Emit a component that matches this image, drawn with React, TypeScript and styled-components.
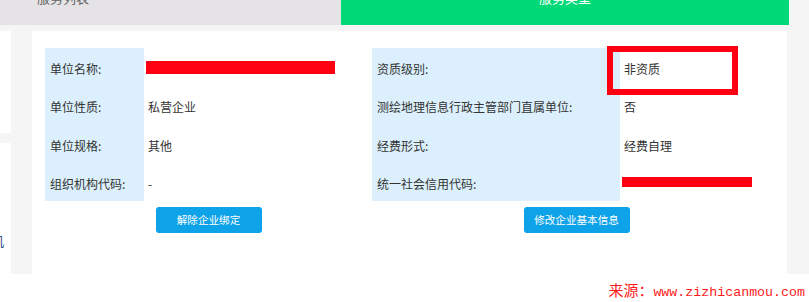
import styled, { createGlobalStyle } from "styled-components";

const GlobalStyle = createGlobalStyle`
  html, body {
    margin: 0;
    padding: 0;
    background: #ffffff;
    font-family: "Noto Sans CJK SC", "Noto Sans", sans-serif;
  }
`;

const Page = styled.div`
  width: 809px;
  height: 302px;
  overflow: hidden;
  display: flex;
  flex-direction: column;
`;

const Workspace = styled.div`
  height: 275px;
  background: #f5f5f5;
  display: flex;
  flex-direction: column;
`;

const TabBar = styled.div`
  display: flex;
  height: 25px;
  margin-right: 20px;
`;

const Tab = styled.div<{ $active?: boolean; $width?: number }>`
  flex: ${({ $width }) => ($width ? `0 0 ${$width}px` : "1")};
  background: ${({ $active }) => ($active ? "#00d977" : "#e5e3e5")};
  color: ${({ $active }) => ($active ? "#ffffff" : "#666666")};
  display: flex;
  justify-content: ${({ $active }) => ($active ? "center" : "flex-start")};
  padding-left: ${({ $active }) => ($active ? "0" : "37px")};
  overflow: hidden;
`;

const TabLabel = styled.span`
  font-size: 13px;
  line-height: 13px;
  margin-top: -9px;
  height: 13px;
`;

const Body = styled.div`
  flex: 1;
  display: flex;
  padding-top: 6px;
  gap: 21px;
`;

const Sidebar = styled.div`
  width: 11px;
  display: flex;
  flex-direction: column;
  gap: 10px;
  overflow: hidden;
`;

const SidePanel = styled.div<{ $grow?: boolean }>`
  background: #ffffff;
  height: ${({ $grow }) => ($grow ? "auto" : "102px")};
  flex: ${({ $grow }) => ($grow ? "1" : "none")};
  display: flex;
  justify-content: flex-end;
  align-items: flex-start;
  overflow: hidden;
`;

const SideText = styled.span`
  margin-top: 91px;
  margin-right: 7px;
  font-size: 13px;
  line-height: 14px;
  color: #2b4f8a;
  white-space: nowrap;
`;

const Card = styled.div`
  width: 755px;
  background: #ffffff;
  padding: 17px 6px 0 13px;
  box-sizing: border-box;
`;

const InfoGrid = styled.div`
  display: grid;
  grid-template-columns: 99px 228px 248px 161px;
  grid-auto-rows: 38.25px;
  font-size: 12px;
  color: #333333;
`;

const LabelCell = styled.div`
  background: #dbf0fc;
  display: flex;
  align-items: center;
  padding: 3px 0 0 5px;
  box-sizing: border-box;
  white-space: nowrap;
`;

const ValueCell = styled.div`
  position: relative;
  display: flex;
  align-items: center;
  padding: 3px 0 0 4px;
  box-sizing: border-box;
  white-space: nowrap;
`;

const Redacted = styled.span<{ $width: number; $height: number; $shift?: number }>`
  display: block;
  width: ${({ $width }) => $width}px;
  height: ${({ $height }) => $height}px;
  margin-left: -2px;
  margin-top: ${({ $shift }) => $shift ?? 0}px;
  background: #ff0012;
`;

const Highlight = styled.span`
  position: absolute;
  left: -13px;
  top: -2px;
  width: 131px;
  height: 49px;
  border: 6px solid #ff0012;
  box-sizing: border-box;
  pointer-events: none;
`;

const ActionRow = styled.div`
  display: grid;
  grid-template-columns: 327px 409px;
  margin-top: 6px;
`;

const ActionSlot = styled.div`
  display: flex;
  justify-content: center;
`;

const ActionButton = styled.button`
  width: 106px;
  height: 26px;
  padding: 0;
  border: none;
  border-radius: 3px;
  background: #0ea2e8;
  color: #ffffff;
  font-family: "Noto Sans CJK SC", "Noto Sans", sans-serif;
  font-size: 10.6px;
  line-height: 26px;
  text-align: center;
  cursor: pointer;
`;

const Footer = styled.div`
  flex: 1;
  display: flex;
  justify-content: flex-end;
  align-items: flex-start;
  padding: 7px 4px 0 0;
`;

const Watermark = styled.span`
  color: #ff1a1a;
  font-size: 15px;
  line-height: 18px;
  white-space: nowrap;
`;

const WatermarkUrl = styled.span`
  font-family: "Liberation Mono", "DejaVu Sans Mono", monospace;
  font-size: 13.3px;
`;

const rows = [
  { left: "单位名称:", leftValue: "redact", right: "资质级别:", rightValue: "非资质" },
  { left: "单位性质:", leftValue: "私营企业", right: "测绘地理信息行政主管部门直属单位:", rightValue: "否" },
  { left: "单位规格:", leftValue: "其他", right: "经费形式:", rightValue: "经费自理" },
  { left: "组织机构代码:", leftValue: "-", right: "统一社会信用代码:", rightValue: "redact" },
];

export default function App() {
  return (
    <>
      <GlobalStyle />
      <Page>
        <Workspace>
          <TabBar>
            <Tab $width={304}>
              <TabLabel>服务列表</TabLabel>
            </Tab>
            <Tab $active>
              <TabLabel>服务类型</TabLabel>
            </Tab>
          </TabBar>
          <Body>
            <Sidebar>
              <SidePanel />
              <SidePanel $grow>
                <SideText>管理机</SideText>
              </SidePanel>
            </Sidebar>
            <Card>
              <InfoGrid>
                {rows.map((row, i) => (
                  <>
                    <LabelCell key={`l${i}`}>{row.left}</LabelCell>
                    <ValueCell key={`lv${i}`}>
                      {row.leftValue === "redact" ? (
                        <Redacted $width={189} $height={13} $shift={-2} />
                      ) : (
                        row.leftValue
                      )}
                    </ValueCell>
                    <LabelCell key={`r${i}`}>{row.right}</LabelCell>
                    <ValueCell key={`rv${i}`}>
                      {row.rightValue === "redact" ? (
                        <Redacted $width={130} $height={10} $shift={-2} />
                      ) : (
                        row.rightValue
                      )}
                      {i === 0 && <Highlight />}
                    </ValueCell>
                  </>
                ))}
              </InfoGrid>
              <ActionRow>
                <ActionSlot>
                  <ActionButton>解除企业绑定</ActionButton>
                </ActionSlot>
                <ActionSlot>
                  <ActionButton>修改企业基本信息</ActionButton>
                </ActionSlot>
              </ActionRow>
            </Card>
          </Body>
        </Workspace>
        <Footer>
          <Watermark>
            来源：<WatermarkUrl>www.zizhicanmou.com</WatermarkUrl>
          </Watermark>
        </Footer>
      </Page>
    </>
  );
}
